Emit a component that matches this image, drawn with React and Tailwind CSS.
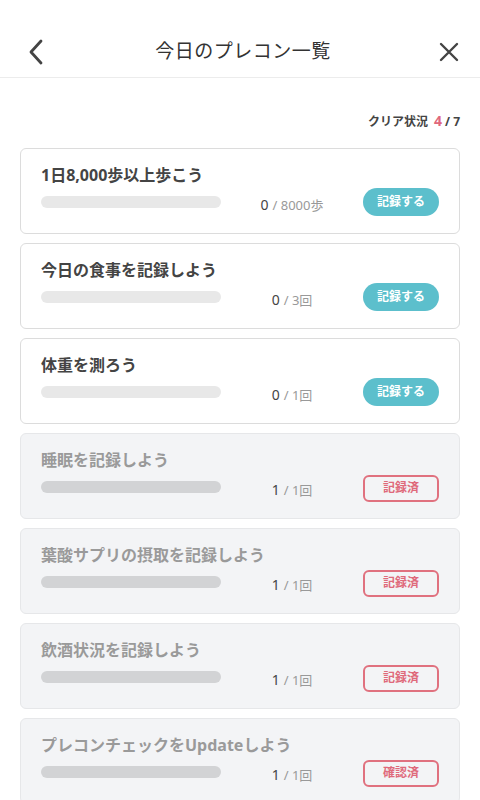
import React from 'react';

const items = [
  { title: '1日8,000歩以上歩こう', done: 0, total: '8000歩', cleared: false },
  { title: '今日の食事を記録しよう', done: 0, total: '3回', cleared: false },
  { title: '体重を測ろう', done: 0, total: '1回', cleared: false },
  { title: '睡眠を記録しよう', done: 1, total: '1回', cleared: true, label: '記録済' },
  { title: '葉酸サプリの摂取を記録しよう', done: 1, total: '1回', cleared: true, label: '記録済' },
  { title: '飲酒状況を記録しよう', done: 1, total: '1回', cleared: true, label: '記録済' },
  { title: 'プレコンチェックをUpdateしよう', done: 1, total: '1回', cleared: true, label: '確認済' },
];

function Card({ item }) {
  return (
    <div
      className={
        'h-[86px] rounded-md border px-5 pt-[13px] ' +
        (item.cleared ? 'bg-[#f3f4f6] border-[#e6e7e9]' : 'bg-white border-[#dcdcdc]')
      }
    >
      <div
        className={
          'text-[16px] font-bold leading-[26px] ' +
          (item.cleared ? 'text-[#9a9a9a]' : 'text-[#444]')
        }
      >
        {item.title}
      </div>
      <div className="flex items-center h-[28px]">
        <div
          className={
            'w-[180px] h-[12px] rounded-full ' +
            (item.cleared ? 'bg-[#d2d3d5]' : 'bg-[#e8e8e8]')
          }
        />
        <div className="flex-1 flex justify-center items-baseline pt-[6px] text-[13px] leading-none">
          <span className="text-[#444] text-[14px]">{item.done}</span>
          <span className="text-[#999] ml-[4px]">/ {item.total}</span>
        </div>
        {item.cleared ? (
          <div className="w-[76px] h-[27px] mt-[2px] rounded-md border-2 border-[#e0717f] text-[#df6a7b] text-[12px] font-bold flex items-center justify-center">
            {item.label}
          </div>
        ) : (
          <div className="w-[76px] h-[28px] rounded-full bg-[#5cbfcc] text-white text-[12px] font-bold flex items-center justify-center">
            記録する
          </div>
        )}
      </div>
    </div>
  );
}

export default function App() {
  return (
    <div
      className="w-[480px] h-[800px] overflow-hidden bg-white"
      style={{ fontFamily: '"Noto Sans", "Noto Sans CJK JP", sans-serif' }}
    >
      {/* ヘッダー */}
      <div className="h-[78px] pt-[26px] border-b border-[#ececec] flex items-center justify-between px-[24px]">
        <svg width="22" height="28" viewBox="0 0 22 28" fill="none" className="ml-[2px]">
          <path d="M15 3 L5 14 L15 25" stroke="#444" strokeWidth="2.8" strokeLinecap="round" strokeLinejoin="round" />
        </svg>
        <div className="text-[19px] text-[#333] tracking-[0.5px]">今日のプレコン一覧</div>
        <svg width="22" height="22" viewBox="0 0 22 22" fill="none" className="mr-[-4px]">
          <path d="M3 3 L19 19 M19 3 L3 19" stroke="#444" strokeWidth="2.4" strokeLinecap="round" />
        </svg>
      </div>

      {/* クリア状況 */}
      <div className="flex justify-end items-baseline pr-[20px] pt-[32px] pb-[17px] text-[12px] font-bold text-[#444]">
        <span>クリア状況</span>
        <span className="text-[#e0677c] text-[14px] ml-[6px]">4</span>
        <span className="ml-[3px]">/ 7</span>
      </div>

      {/* リスト */}
      <div className="flex flex-col gap-[9px] px-[20px]">
        {items.map((item, i) => (
          <Card key={i} item={item} />
        ))}
      </div>
    </div>
  );
}
